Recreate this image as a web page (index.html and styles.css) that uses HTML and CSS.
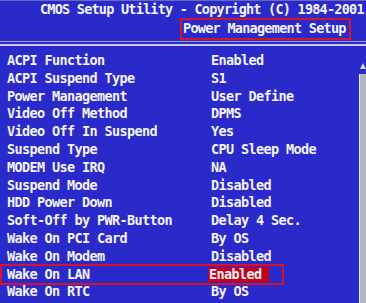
FILE: index.html
```html
<!DOCTYPE html>
<html>
<head>
<meta charset="utf-8">
<link rel="stylesheet" href="styles.css">
</head>
<body>
<div class="screen">
  <header class="head">
    <div class="title">CMOS Setup Utility - Copyright (C) 1984-2001</div>
    <div class="subrow"><div class="subtitle">Power Management Setup</div></div>
  </header>
  <div class="sep"></div>
  <main class="main">
    <div class="list">
      <div class="row"><span>ACPI Function</span><span>Enabled</span></div>
      <div class="row"><span>ACPI Suspend Type</span><span>S1</span></div>
      <div class="row"><span>Power Management</span><span>User Define</span></div>
      <div class="row"><span>Video Off Method</span><span>DPMS</span></div>
      <div class="row"><span>Video Off In Suspend</span><span>Yes</span></div>
      <div class="row"><span>Suspend Type</span><span>CPU Sleep Mode</span></div>
      <div class="row"><span>MODEM Use IRQ</span><span>NA</span></div>
      <div class="row"><span>Suspend Mode</span><span>Disabled</span></div>
      <div class="row"><span>HDD Power Down</span><span>Disabled</span></div>
      <div class="row"><span>Soft-Off by PWR-Button</span><span>Delay 4 Sec.</span></div>
      <div class="row"><span>Wake On PCI Card</span><span>By OS</span></div>
      <div class="row"><span>Wake On Modem</span><span>Disabled</span></div>
      <div class="row mark"><span>Wake On LAN</span><span class="sel">Enabled</span></div>
      <div class="row"><span>Wake On RTC</span><span>By OS</span></div>
    </div>
    <div class="scroll">
      <div class="arrow"></div>
      <div class="bar"></div>
    </div>
  </main>
</div>
</body>
</html>
```
FILE: styles.css
```css
html, body {
  margin: 0;
  padding: 0;
}
body {
  width: 366px;
  height: 303px;
  overflow: hidden;
  background: #2a2acb;
}
.screen {
  width: 366px;
  height: 303px;
  display: flex;
  flex-direction: column;
  font-family: "DejaVu Sans Mono", "Liberation Mono", monospace;
  font-weight: bold;
  font-size: 13.5px;
  letter-spacing: -0.63px;
  color: #f4f4f8;
  background: #2a2acb;
}
.head {
  height: 41px;
  box-sizing: border-box;
  border-top: 1px solid #6a6ab8;
}
.title {
  padding-left: 40px;
  line-height: 17px;
  white-space: nowrap;
  letter-spacing: -0.77px;
}
.subrow {
  padding-left: 180px;
}
.subtitle {
  width: 171px;
  height: 22px;
  box-sizing: border-box;
  border: 2px solid #d4142c;
  padding-left: 1px;
  line-height: 16px;
  white-space: nowrap;
  letter-spacing: -0.73px;
}
.sep {
  height: 2px;
  border-top: 1px solid #9a9ad0;
  border-bottom: 2px solid #c8c8dc;
}
.main {
  flex: 1;
  display: flex;
  min-height: 0;
}
.list {
  flex: 1;
  padding-top: 6px;
}
.row {
  display: grid;
  grid-template-columns: 204px 1fr;
  padding-left: 7px;
  height: 17.8px;
  line-height: 17.8px;
  white-space: nowrap;
}
.row.mark {
  width: 280px;
  margin-left: 2px;
  padding-left: 5px;
  box-sizing: border-box;
  outline: 2px solid #d4142c;
  outline-offset: 0;
  grid-template-columns: 202px 1fr;
}
.sel {
  justify-self: start;
  background: #c4001c;
  padding: 0 8px 0 1px;
  margin-left: -1px;
  line-height: 15px;
  align-self: center;
}
.scroll {
  width: 7px;
  display: flex;
  flex-direction: column;
  align-items: center;
  padding-top: 17px;
}
.arrow {
  width: 0;
  height: 0;
  border-left: 3px solid transparent;
  border-right: 3px solid transparent;
  border-bottom: 6px solid #d8d8e4;
}
.bar {
  margin-top: 5px;
  flex: 1;
  width: 7px;
  box-sizing: border-box;
  background: #b4b4c4;
  border-left: 1px solid #ececf4;
}
```
